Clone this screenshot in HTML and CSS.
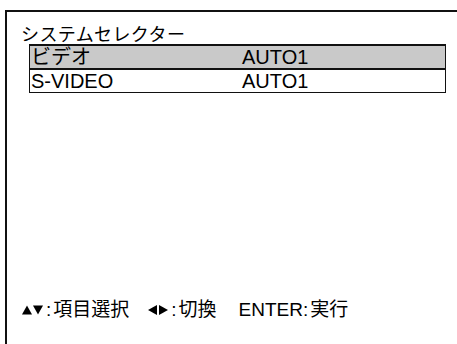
FILE: index.html
```html
<!DOCTYPE html>
<html lang="ja">
<head>
<meta charset="utf-8">
<link rel="stylesheet" href="styles.css">
</head>
<body>
<div class="frame">
  <div class="title">システムセレクター</div>
  <div class="table">
    <div class="row selected"><span class="label">ビデオ</span><span class="value">AUTO1</span></div>
    <div class="row"><span class="label">S-VIDEO</span><span class="value">AUTO1</span></div>
  </div>
  <div class="footer">
    <span class="hint"><svg class="arrows" width="21" height="10" viewBox="0 0 21 10"><polygon points="0,9.5 5,0.5 10,9.5"/><polygon points="11,0.5 21,0.5 16,9.5"/></svg><span class="colon">:</span>項目選択</span>
    <span class="hint"><svg class="arrows" width="20" height="10" viewBox="0 0 20 10"><polygon points="9,0 9,10 0,5"/><polygon points="11,0 11,10 20,5"/></svg><span class="colon">:</span>切換</span>
    <span class="hint">ENTER<span class="colon">:</span>実行</span>
  </div>
</div>
</body>
</html>
```

FILE: styles.css
```css
html, body {
  margin: 0;
  padding: 0;
  background: #ffffff;
  overflow: hidden;
}
body {
  width: 457px;
  height: 344px;
  font-family: "Liberation Sans", "Noto Sans CJK JP", sans-serif;
  color: #000000;
}
.frame {
  margin: 10px 0 0 5px;
  width: 452px;
  height: 334px;
  border-top: 2px solid #111111;
  border-left: 2px solid #111111;
  box-sizing: border-box;
  padding: 14px 0 0 14px;
  overflow: hidden;
}
.title {
  font-size: 18px;
  letter-spacing: 0.4px;
  line-height: 18px;
  height: 18px;
}
.table {
  margin: 0 0 0 8px;
  width: 417px;
  border: 1px solid #111111;
  border-top-width: 2px;
  box-sizing: border-box;
}
.row {
  display: flex;
  height: 22px;
  align-items: center;
  font-size: 20px;
  line-height: 22px;
  padding-left: 1px;
}
.row + .row {
  border-top: 2px solid #111111;
}
.row.selected {
  background: #c9c9c9;
}
.label {
  width: 211px;
}
.footer {
  margin-top: 207px;
  display: flex;
  gap: 19px;
  font-size: 19px;
  line-height: 20px;
  padding-left: 1px;
}
.hint {
  display: flex;
  align-items: center;
}
.hint + .hint + .hint {
  margin-left: 3px;
}
.arrows {
  fill: #000000;
  margin-right: 3px;
}
.colon {
  margin-right: 2px;
}
```
